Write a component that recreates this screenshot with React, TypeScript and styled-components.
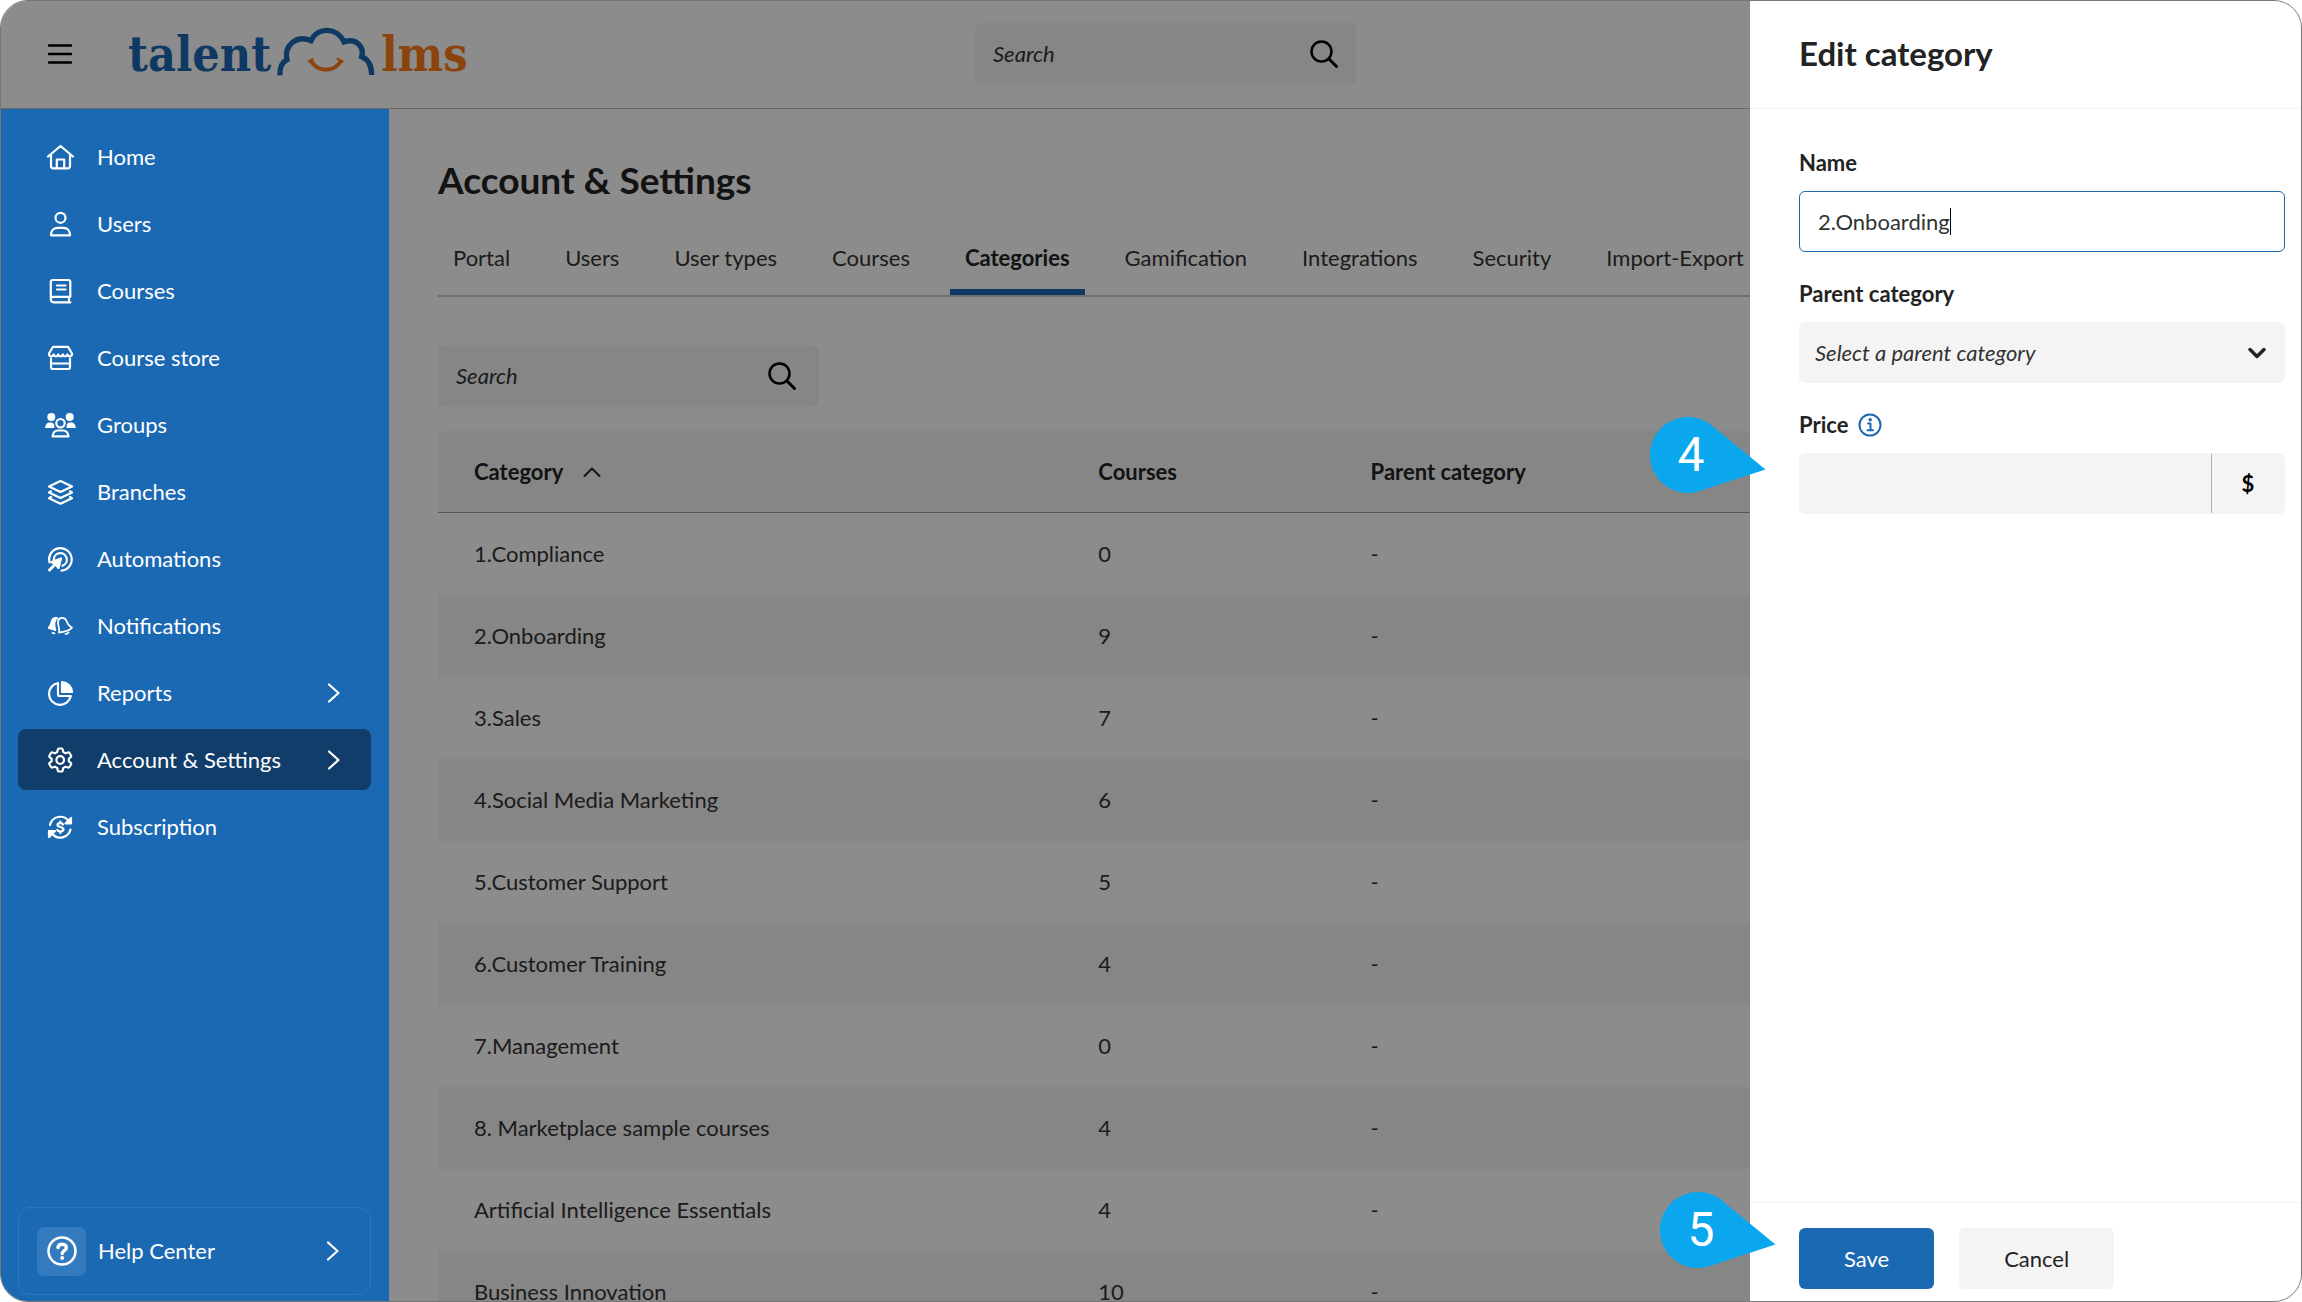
import React from "react";
import styled, { createGlobalStyle, css } from "styled-components";

const brand = "#1c69b3";
const ink = "#232323";
const softInk = "#333";
const fieldBg = "#f4f4f4";

const GlobalStyle = createGlobalStyle`
  *, *::before, *::after { box-sizing: border-box; }
  body { margin: 0; background: #fff; }
  body, button, input, select {
    font-family: Lato, "Open Sans", sans-serif;
    font-size: 22px;
    line-height: 28px;
    color: ${ink};
  }
  button { border: 0; padding: 0; background: none; cursor: pointer; }
`;

const Frame = styled.div`
  position: relative;
  display: flex;
  flex-direction: column;
  height: 100vh;
  border: 1px solid #777;
  border-radius: 28px;
  overflow: hidden;
`;

const Backdrop = styled.div`
  position: absolute;
  inset: 0;
  z-index: 1;
  background: rgba(0, 0, 0, 0.45);
`;

/* ---------- top bar ---------- */

const TopBar = styled.header`
  display: grid;
  grid-template-columns: 1fr auto 1fr;
  align-items: center;
  flex: none;
  height: 108px;
  padding: 0 16px 2px 45px;
  border-bottom: 1px solid #c0c0c0;
`;

const TopLeft = styled.div`
  display: flex;
  align-items: center;
  gap: 54px;
`;

const MenuButton = styled.button`
  display: flex;
  color: #000;
`;

const LogoLink = styled.a`
  display: flex;
  align-items: center;
  gap: 3px;
  text-decoration: none;
`;

const LogoWord = styled.span<{ $tone: string }>`
  font-family: "DejaVu Serif Condensed", "DejaVu Serif", serif;
  font-stretch: condensed;
  font-weight: 700;
  font-size: 48px;
  line-height: 56px;
  color: ${(p) => p.$tone};
`;

const SearchBox = styled.label<{ $inset: number }>`
  display: flex;
  align-items: center;
  width: 381px;
  height: 62px;
  padding: 0 ${(p) => p.$inset}px 0 16px;
  border-radius: 6px;
  background: ${fieldBg};
  color: #000;
`;

const SearchInput = styled.input`
  flex: 1;
  min-width: 0;
  border: 0;
  padding: 0 2px;
  background: none;
  outline: none;
  font-style: italic;
  &::placeholder { color: ${softInk}; opacity: 1; }
`;

/* ---------- sidebar ---------- */

const Body = styled.div`
  display: flex;
  flex: 1;
  min-height: 0;
`;

const Sidebar = styled.aside`
  position: relative;
  z-index: 2;
  display: flex;
  flex-direction: column;
  justify-content: space-between;
  flex: none;
  width: 388px;
  padding: 17px 18px 6px 17px;
  background: ${brand};
`;

const NavList = styled.ul`
  display: flex;
  flex-direction: column;
  gap: 6px;
  margin: 0;
  padding: 0;
  list-style: none;
`;

const NavLink = styled.a<{ $active?: boolean }>`
  display: flex;
  align-items: center;
  gap: 23px;
  height: 61px;
  padding: 0 31px 0 28px;
  border-radius: 8px;
  color: #fff;
  text-decoration: none;
  background: ${(p) => (p.$active ? "#103d69" : "transparent")};
`;

const Grow = styled.span`
  flex: 1;
`;

const HelpLink = styled.a`
  display: flex;
  align-items: center;
  gap: 12px;
  height: 88px;
  padding: 0 31px 0 18px;
  border: 1px solid #2f76bd;
  border-radius: 12px;
  color: #fff;
  text-decoration: none;
`;

const HelpTile = styled.span`
  display: grid;
  place-items: center;
  width: 49px;
  height: 49px;
  border-radius: 7px;
  background: #337abf;
`;

/* ---------- main ---------- */

const Main = styled.main`
  flex: 1;
  min-width: 0;
  padding: 49px 48px 0 49px;
  overflow: hidden;
`;

const PageTitle = styled.h1`
  margin: 0;
  font-size: 37px;
  line-height: 44px;
  font-weight: 700;
`;

const Tabs = styled.nav`
  display: flex;
  gap: 25px;
  margin: 25px 0 48px;
  border-bottom: 2px solid #c1ccd1;
`;

const Tab = styled.a<{ $active?: boolean }>`
  padding: 17px 15px;
  border-bottom: 6px solid transparent;
  color: ${softInk};
  text-decoration: none;
  white-space: nowrap;
  ${(p) =>
    p.$active &&
    css`
      font-weight: 700;
      color: ${ink};
      border-color: ${brand};
    `}
`;

const Table = styled.table`
  width: 100%;
  margin-top: 24px;
  table-layout: fixed;
  border-collapse: separate;
  border-spacing: 0;
`;

const Col = styled.col<{ $share: number }>`
  width: ${(p) => p.$share}%;
`;

const HeadCell = styled.th`
  height: 82px;
  padding: 0 36px;
  border-bottom: 1px solid #9c9c9c;
  background: ${fieldBg};
  text-align: left;
  font-weight: 700;
  &:first-child { border-top-left-radius: 6px; }
`;

const SortButton = styled.button`
  display: flex;
  align-items: center;
  gap: 20px;
  font-weight: 700;
`;

const Row = styled.tr`
  &:nth-child(even) { background: ${fieldBg}; }
`;

const Cell = styled.td`
  height: 82px;
  padding: 0 36px;
  color: ${softInk};
`;

/* ---------- drawer ---------- */

const Drawer = styled.section`
  position: absolute;
  top: 0;
  right: 0;
  bottom: 0;
  z-index: 3;
  display: flex;
  flex-direction: column;
  width: 551px;
  background: #fff;
`;

const DrawerHeader = styled.header`
  display: flex;
  align-items: center;
  height: 108px;
  padding: 0 49px 4px;
  border-bottom: 1px solid ${fieldBg};
`;

const DrawerTitle = styled.h2`
  margin: 0;
  font-size: 33px;
  line-height: 40px;
  font-weight: 700;
`;

const Form = styled.form`
  display: flex;
  flex-direction: column;
  gap: 28px;
  flex: 1;
  padding: 40px 16px 0 49px;
`;

const Field = styled.div`
  display: flex;
  flex-direction: column;
  gap: 14px;
`;

const LabelRow = styled.div`
  display: flex;
  align-items: center;
  gap: 10px;
`;

const Label = styled.label`
  font-weight: 700;
`;

const InfoButton = styled.button`
  display: flex;
  color: ${brand};
`;

const Control = styled.div<{ $focused?: boolean }>`
  position: relative;
  display: flex;
  align-items: center;
  height: 61px;
  border: 1px solid ${(p) => (p.$focused ? brand : fieldBg)};
  border-radius: 6px;
  background: ${(p) => (p.$focused ? "#fff" : fieldBg)};
`;

const NameInput = styled.input`
  field-sizing: content;
  max-width: 90%;
  margin-left: 18px;
  padding: 0;
  border: 0;
  outline: none;
  background: none;
  color: ${softInk};
`;

const Caret = styled.span`
  width: 1px;
  height: 27px;
  background: #000;
`;

const Select = styled.select`
  width: 100%;
  height: 100%;
  padding: 0 60px 0 15px;
  border: 0;
  border-radius: 6px;
  appearance: none;
  background: none;
  font-style: italic;
  color: ${softInk};
`;

const SelectArrow = styled.span`
  position: absolute;
  right: 18px;
  display: flex;
  pointer-events: none;
`;

const PriceInput = styled.input`
  flex: 1;
  min-width: 0;
  height: 100%;
  padding: 0 18px;
  border: 0;
  outline: none;
  background: none;
`;

const Currency = styled.span`
  display: grid;
  place-items: center;
  align-self: stretch;
  width: 73px;
  border-left: 1px solid #a9b0b4;
  font-weight: 700;
  color: #000;
`;

const DrawerFooter = styled.footer`
  position: relative;
  display: flex;
  gap: 25px;
  padding: 25px 49px 12px;
  border-top: 1px solid ${fieldBg};
`;

const ActionButton = styled.button<{ $primary?: boolean }>`
  height: 61px;
  padding: 0 45px;
  border-radius: 6px;
  background: ${(p) => (p.$primary ? brand : fieldBg)};
  color: ${(p) => (p.$primary ? "#fff" : ink)};
`;

const MarkerBox = styled.div<{ $left: number; $top: number }>`
  position: absolute;
  left: ${(p) => p.$left}px;
  top: ${(p) => p.$top}px;
  width: 116px;
  height: 76px;
  pointer-events: none;
`;

const MarkerDigit = styled.span`
  position: absolute;
  inset: 0 34px 0 0;
  display: grid;
  place-items: center;
  font-family: Roboto, sans-serif;
  font-size: 48px;
  line-height: 56px;
  color: #fff;
`;

function Marker({ n, left, top }: { n: number; left: number; top: number }) {
  return (
    <MarkerBox $left={left} $top={top}>
      <svg width="116" height="76" viewBox="0 0 116 76" aria-hidden>
        <path d="M49.7 74.1A38 38 0 1 1 62.4 8.9L115.500 52.500Z" fill="#0aa7ee" />
      </svg>
      <MarkerDigit>{n}</MarkerDigit>
    </MarkerBox>
  );
}

/* ---------- icons ---------- */

const IconSvg = styled.svg`
  flex: none;
  display: block;
  overflow: visible;
  fill: none;
  stroke: currentColor;
  stroke-linecap: round;
  stroke-linejoin: round;
`;

const Icon = ({ children }: { children: React.ReactNode }) => (
  <IconSvg width="28" height="28" viewBox="0 0 28 28" strokeWidth="2.200" aria-hidden>
    {children}
  </IconSvg>
);

const icons: Record<string, React.ReactNode> = {
  home: (
    <Icon>
      <path d="M2 13.500L14.500 3L27 13.500M5 11.500V23q0 2.300 2.300 2.300H21.700Q24 25.300 24 23V11.500M10.800 25V16.500H18.200V25" />
    </Icon>
  ),
  users: (
    <Icon>
      <circle cx="14.5" cy="7.800" r="5" />
      <path d="M5 25.300C5 20.500 7.800 17.800 11.500 17.800H17.500C21.200 17.800 24 20.500 24 25.300Z" />
    </Icon>
  ),
  courses: (
    <Icon>
      <path d="M24.300 25.300H7.500A2.700 2.700 0 0 1 4.800 22.600V5Q4.800 3 6.800 3H22.300Q24.300 3 24.300 5V19.800H7.500A2.700 2.700 0 0 0 4.800 22.500M23 20V25" />
      <path d="M11 8.500H19.500M11 12.500H19.500" />
    </Icon>
  ),
  store: (
    <Icon>
      <path d="M7 2.800H22L26 9.500C26.400 12.800 22.500 13.300 21.300 10.500C20.500 13 17.800 13 16.800 10.500C15.800 13 13.200 13 12.200 10.500C11.200 13 8.500 13 7.700 10.500C6.500 13.300 2.600 12.800 3 9.500Z" />
      <path d="M5 14.500V23Q5 25 7 25H22Q24 25 24 23V14.500M5 19.500H24" />
    </Icon>
  ),
  groups: (
    <Icon>
      <circle cx="14.5" cy="12.200" r="4.200" />
      <path d="M6.500 25.300C7 21.500 9.500 19.500 12 19.500H17C19.500 19.500 22 21.500 22.500 25.300Z" />
      <g fill="currentColor" stroke="none">
        <circle cx="5.300" cy="6" r="4" />
        <circle cx="23.700" cy="6" r="4" />
        <path d="M-0.800 17C-0.800 13.300 1.500 11.500 4 11.500C6.500 11.500 7.500 12.200 8 13.200L8.500 17ZM29.800 17C29.800 13.300 27.500 11.500 25 11.500C22.500 11.500 21.500 12.200 21 13.200L20.500 17Z" />
      </g>
    </Icon>
  ),
  branches: (
    <Icon>
      <path d="M14.500 3L26 8.500L14.500 14L3 8.500ZM5 13.300L3 14.500L14.500 20L26 14.500L24 13.300M5 19L3 20.200L14.500 25.700L26 20.200L24 19" />
    </Icon>
  ),
  automations: (
    <Icon>
      <path d="M3.500 17.500A11.300 11.300 0 1 1 15.500 25.700M7.800 14.500A6.500 6.500 0 1 1 16.500 20.800" />
      <path d="M3.500 25L9 19.500" strokeWidth="3" />
      <path d="M15 13.500L12.500 23L10.200 20L5.500 17Z" fill="currentColor" />
    </Icon>
  ),
  notifications: (
    <Icon>
      <path d="M10.500 5.800C6 5 5.500 9 4.500 13L2.500 16L9.500 18.300C8 13.500 8 8.500 11.500 6Z" fill="currentColor" strokeWidth="1.500" />
      <path d="M13 20.500C14 16.500 11.800 14 12 10C12.300 5.500 18.500 4 20.500 9C21.700 12 22.500 14 26 15.500C25 18 18 20 13 20.500ZM6.500 20.800L8.500 21.300M19.500 21.800Q21.500 22 22.500 20.500" strokeWidth="1.800" />
    </Icon>
  ),
  reports: (
    <Icon>
      <path d="M12 4A11 11 0 1 0 24.800 17H13.500Q12 17 12 15.500Z" />
      <path d="M16 3A10.500 10.500 0 0 1 26 13H16Z" fill="currentColor" />
    </Icon>
  ),
  settings: (
    <Icon>
      <path d="M11.800 3.500Q12 2.500 13 2.500H15.500Q16.500 2.500 16.700 3.500L17.200 6Q18.500 6.500 19.500 7.300L22 6.500Q23 6.200 23.500 7L25 9.500Q25.500 10.400 24.700 11.100L22.800 12.800V15.200L24.700 16.900Q25.500 17.600 25 18.500L23.500 21Q23 21.800 22 21.500L19.500 20.700Q18.500 21.500 17.200 22L16.700 24.500Q16.500 25.500 15.500 25.500H13Q12 25.500 11.800 24.500L11.200 22Q10 21.500 9 20.700L6.500 21.500Q5.500 21.800 5 21L3.500 18.500Q3 17.600 3.700 16.900L5.700 15.200V12.800L3.700 11.100Q3 10.400 3.500 9.500L5 7Q5.500 6.200 6.500 6.500L9 7.300Q10 6.500 11.200 6Z" />
      <circle cx="14.200" cy="14" r="3.800" />
    </Icon>
  ),
  subscription: (
    <Icon>
      <path d="M4 12A10.500 10.500 0 0 1 23 8.500M24.500 16.500A10.500 10.500 0 0 1 6 20.500" />
      <path d="M25 5V10.500H19.500ZM3 24V18H9Z" fill="currentColor" />
      <path d="M17 11.500C16.500 9.500 11.500 9.500 11.500 12C11.500 14.500 17.500 13.500 17.500 16.300C17.500 19 12 19 11.300 16.800M14.300 8.500V10M14.300 18.500V20" />
    </Icon>
  ),
};

const ChevronRight = () => (
  <IconSvg width="13" height="20" viewBox="0 0 13 20" strokeWidth="2.200" aria-hidden>
    <path d="M2 1.500L11.500 10L2 18.500" />
  </IconSvg>
);

const SearchIcon = () => (
  <IconSvg width="28" height="28" viewBox="0 0 28 28" strokeWidth="2.500" aria-hidden>
    <circle cx="11.500" cy="11.500" r="10" />
    <path d="M19 19L26.500 26.500" strokeWidth="3" />
  </IconSvg>
);

const CloudMark = () => (
  <IconSvg width="104" height="54" viewBox="470 36 312 162" aria-hidden>
    <g strokeLinecap="butt" strokeLinejoin="miter">
      <path
        d="M488 181C486 155 494 142 509 134C499 92 538 58 581 77C600 35 660 35 680 81C716 68 742 95 733 125C755 134 763 152 763 180"
        stroke={brand}
        strokeWidth="16"
      />
      <path d="M581 138C602 173 650 173 671 138" stroke="#ff7c1d" strokeWidth="12" />
      <path d="M572 141L588 131M658 130L678 141" stroke="#ff7c1d" strokeWidth="7" />
    </g>
  </IconSvg>
);

/* ---------- data ---------- */

const nav = [
  { icon: "home", label: "Home" },
  { icon: "users", label: "Users" },
  { icon: "courses", label: "Courses" },
  { icon: "store", label: "Course store" },
  { icon: "groups", label: "Groups" },
  { icon: "branches", label: "Branches" },
  { icon: "automations", label: "Automations" },
  { icon: "notifications", label: "Notifications" },
  { icon: "reports", label: "Reports", more: true },
  { icon: "settings", label: "Account & Settings", more: true, active: true },
  { icon: "subscription", label: "Subscription" },
];

const tabs = [
  "Portal",
  "Users",
  "User types",
  "Courses",
  "Categories",
  "Gamification",
  "Integrations",
  "Security",
  "Import-Export",
];

const categories: [string, number][] = [
  ["1.Compliance", 0],
  ["2.Onboarding", 9],
  ["3.Sales", 7],
  ["4.Social Media Marketing", 6],
  ["5.Customer Support", 5],
  ["6.Customer Training", 4],
  ["7.Management", 0],
  ["8. Marketplace sample courses", 4],
  ["Artificial Intelligence Essentials", 4],
  ["Business Innovation", 10],
];

export default function App() {
  const [name, setName] = React.useState("2.Onboarding");
  return (
    <>
      <GlobalStyle />
      <Frame>
        <TopBar>
          <TopLeft>
            <MenuButton aria-label="Menu">
              <Icon>
                <path d="M3 5.500H25M3 14H25M3 22.500H25" strokeWidth="2.500" />
              </Icon>
            </MenuButton>
            <LogoLink href="#">
              <LogoWord $tone={brand}>talent</LogoWord>
              <CloudMark />
              <LogoWord $tone="#ff7c1d">lms</LogoWord>
            </LogoLink>
          </TopLeft>
          <SearchBox $inset={18}>
            <SearchInput placeholder="Search" aria-label="Search" />
            <SearchIcon />
          </SearchBox>
        </TopBar>

        <Body>
          <Sidebar>
            <NavList>
              {nav.map((item) => (
                <li key={item.label}>
                  <NavLink href="#" $active={item.active}>
                    {icons[item.icon]}
                    <Grow>{item.label}</Grow>
                    {item.more && <ChevronRight />}
                  </NavLink>
                </li>
              ))}
            </NavList>
            <HelpLink href="#">
              <HelpTile>
                <IconSvg width="30" height="30" viewBox="0 0 30 30" strokeWidth="2.500" aria-hidden>
                  <circle cx="15" cy="15" r="13.500" />
                  <path d="M11 11.500C11.500 7 19.500 7.300 19.300 11.800C19.200 14.800 15.200 14.500 15.200 17.500" strokeWidth="3.500" />
                  <circle cx="15.200" cy="22" r="1" strokeWidth="2" />
                </IconSvg>
              </HelpTile>
              <Grow>Help Center</Grow>
              <ChevronRight />
            </HelpLink>
          </Sidebar>

          <Main>
            <PageTitle>Account &amp; Settings</PageTitle>
            <Tabs>
              {tabs.map((t) => (
                <Tab key={t} href="#" $active={t === "Categories"}>
                  {t}
                </Tab>
              ))}
            </Tabs>
            <SearchBox $inset={23}>
              <SearchInput placeholder="Search" aria-label="Search categories" />
              <SearchIcon />
            </SearchBox>
            <Table>
              <colgroup>
                <Col $share={34.4} />
                <Col $share={15} />
                <Col $share={50.6} />
              </colgroup>
              <thead>
                <tr>
                  <HeadCell>
                    <SortButton>
                      Category
                      <IconSvg width="18" height="10" viewBox="0 0 18 10" strokeWidth="2" aria-hidden>
                        <path d="M1.500 9L9 1.500L16.500 9" />
                      </IconSvg>
                    </SortButton>
                  </HeadCell>
                  <HeadCell>Courses</HeadCell>
                  <HeadCell>Parent category</HeadCell>
                </tr>
              </thead>
              <tbody>
                {categories.map(([label, count]) => (
                  <Row key={label}>
                    <Cell>{label}</Cell>
                    <Cell>{count}</Cell>
                    <Cell>-</Cell>
                  </Row>
                ))}
              </tbody>
            </Table>
          </Main>
        </Body>

        <Backdrop />

        <Drawer aria-label="Edit category">
          <DrawerHeader>
            <DrawerTitle>Edit category</DrawerTitle>
          </DrawerHeader>
          <Form>
            <Field>
              <Label htmlFor="name">Name</Label>
              <Control $focused>
                <NameInput id="name" value={name} onChange={(e) => setName(e.target.value)} />
                <Caret />
              </Control>
            </Field>
            <Field>
              <Label htmlFor="parent">Parent category</Label>
              <Control>
                <Select id="parent">
                  <option>Select a parent category</option>
                </Select>
                <SelectArrow>
                  <IconSvg width="18" height="12" viewBox="0 0 18 12" strokeWidth="3.500" aria-hidden>
                    <path d="M2 2.500L9 9.500L16 2.500" />
                  </IconSvg>
                </SelectArrow>
              </Control>
            </Field>
            <Field>
              <LabelRow>
                <Label htmlFor="price">Price</Label>
                <InfoButton type="button" aria-label="About price">
                  <IconSvg width="24" height="24" viewBox="0 0 24 24" strokeWidth="2" aria-hidden>
                    <circle cx="12" cy="12" r="10.500" />
                    <path d="M10 10.500H12.500V17M9.500 17.200H15" />
                    <circle cx="12.200" cy="6.800" r="0.800" />
                  </IconSvg>
                </InfoButton>
              </LabelRow>
              <Control>
                <PriceInput id="price" />
                <Currency>$</Currency>
                <Marker n={4} left={-150} top={-37} />
              </Control>
            </Field>
          </Form>
          <DrawerFooter>
            <ActionButton $primary>Save</ActionButton>
            <ActionButton>Cancel</ActionButton>
            <Marker n={5} left={-90} top={-11} />
          </DrawerFooter>
        </Drawer>
      </Frame>
    </>
  );
}
